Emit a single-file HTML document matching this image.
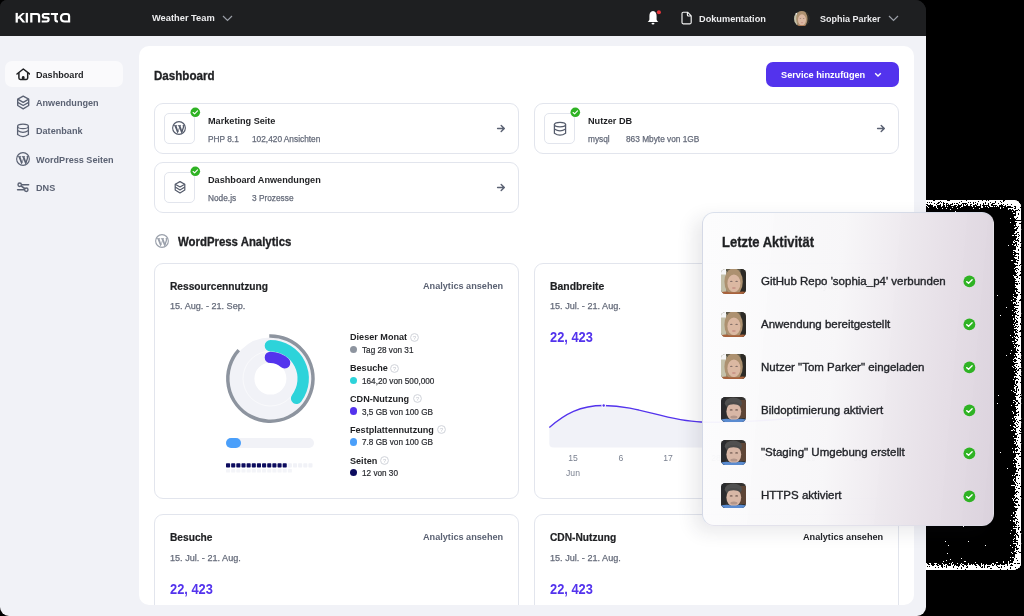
<!DOCTYPE html>
<html><head><meta charset="utf-8">
<style>
*{margin:0;padding:0;box-sizing:border-box}
html,body{width:1024px;height:616px;overflow:hidden;background:#000;font-family:"Liberation Sans",sans-serif}
body{position:relative}
.abs,.av{position:absolute}
.t{position:absolute;white-space:nowrap;line-height:1;will-change:transform}
#win{position:absolute;left:0;top:0;width:926px;height:616px;background:linear-gradient(#1e1f21 0 35.5px,#f1f2f7 35.5px);border-radius:7px 11px 9px 9px;overflow:hidden}
#top{position:absolute;left:0;top:0;width:926px;height:35.5px;background:#1e1f21}
#fringe{position:absolute;left:860px;top:200px;width:161.3px;height:370px;border-radius:7px;background:#0a0a0a;box-shadow:inset 0 0 10px 2px rgba(255,255,255,0.8)}
#act{position:absolute;left:702px;top:212px;width:291.5px;height:313.5px;border-radius:12px;border:1px solid rgba(210,218,232,0.8);
 background:linear-gradient(95deg,rgba(252,252,253,0.96) 0%,rgba(247,246,248,0.965) 45%,rgba(229,222,230,0.97) 80%,rgba(218,209,220,0.98) 100%);border-right-color:rgba(222,216,226,0.6);border-bottom-color:rgba(222,220,232,0.8);
 box-shadow:-8px 6px 18px rgba(40,40,60,0.10)}
.av.w{background:radial-gradient(ellipse 33% 40% at 50% 52%,#e2b9a3 0%,#d9ad95 70%,rgba(217,173,149,0) 72%),radial-gradient(ellipse 48% 60% at 50% 45%,#b99668 0%,#a88457 80%,rgba(0,0,0,0) 82%),linear-gradient(90deg,#8f8c76,#5e4d3c 60%,#3a3228)}
.av.m{background:radial-gradient(ellipse 30% 36% at 46% 50%,#c7a08c 0%,#b98f7a 70%,rgba(0,0,0,0) 72%),radial-gradient(ellipse 40% 40% at 46% 30%,#2f2b29 0%,#2f2b29 80%,rgba(0,0,0,0) 82%),linear-gradient(180deg,#51504d 0%,#3a3937 70%,#4f7fc6 78%,#4f7fc6 100%)}
</style></head><body>
<svg class="abs" style="left:0;top:0" width="1024" height="616" viewBox="0 0 1024 616">
<defs>
<filter id="blur4" x="-20%" y="-20%" width="140%" height="140%"><feGaussianBlur stdDeviation="3.5"/></filter>
<filter id="speck" filterUnits="userSpaceOnUse" x="900" y="180" width="124" height="420" color-interpolation-filters="sRGB">
<feTurbulence type="fractalNoise" baseFrequency="0.6" numOctaves="2" seed="7" result="n"/>
<feColorMatrix in="n" type="matrix" values="1 0 0 0 0  1 0 0 0 0  1 0 0 0 0  0 0 0 0 1" result="ng"/>
<feComposite in="SourceGraphic" in2="ng" operator="arithmetic" k1="0" k2="1" k3="2.0" k4="-1.12" result="sum"/>
<feComponentTransfer in="sum"><feFuncR type="discrete" tableValues="0 1"/><feFuncG type="discrete" tableValues="0 1"/><feFuncB type="discrete" tableValues="0 1"/><feFuncA type="linear" slope="0" intercept="1"/></feComponentTransfer>
</filter>
</defs>
<clipPath id="fclip"><rect x="860" y="200" width="161.3" height="370" rx="7"/></clipPath>
<g clip-path="url(#fclip)"><g filter="url(#speck)">
<rect x="900" y="180" width="124" height="420" fill="#000"/>
<rect x="860" y="200" width="161.3" height="370" rx="7" fill="#fff"/>
<rect x="845" y="206" width="170" height="358" rx="9" fill="#000" filter="url(#blur4)"/>
</g></g>
</svg>
<div id="win">
<div id="top"></div>
<svg class="abs" style="left:12px;top:9px;" width="62" height="18" viewBox="0 0 62 18"><g fill="#fff">
<rect x="3.6" y="3.9" width="2.25" height="9.7"/>
<polygon points="5.5,8.2 10.4,3.9 13.0,3.9 5.5,10.7"/>
<polygon points="7.0,9.3 8.6,7.7 13.4,13.6 10.6,13.6"/>
<rect x="13.7" y="3.9" width="2.25" height="9.7"/>
<path d="M18.2 13.6 V3.9 H25.0 Q28.2 3.9 28.2 7.1 V13.6 H25.95 V7.4 Q25.95 6.1 24.7 6.1 H20.45 V13.6 Z"/>
</g>
<g fill="none" stroke="#fff" stroke-width="2.2">
<path d="M37.6 5.0 H32.3 Q30.8 5.0 30.8 6.7 Q30.8 8.6 32.6 8.6 H34.8 Q36.6 8.6 36.6 10.6 Q36.6 12.5 34.8 12.5 H29.7"/>
<path d="M43.4 3.9 V10.6 Q43.4 12.5 45.3 12.5 H46.0"/><path d="M38.8 5.0 H46.0"/>
<path d="M57.1 12.5 H52.8 Q49.0 12.5 49.0 8.75 Q49.0 5.0 52.8 5.0 H54.8 Q57.1 5.0 57.1 7.3 V13.6"/>
</g></svg>
<div class="t" style="left:151.50px;top:13.93px;font-size:9.3px;font-weight:bold;color:#ececee;transform:scaleY(1.04);transform-origin:0 7.87px;">Weather Team</div>
<svg class="abs" style="left:222px;top:15px;" width="11" height="7" viewBox="0 0 11 7"><path d="M1 1 L5.5 5.5 L10 1" fill="none" stroke="#9a9ea6" stroke-width="1.2"/></svg>
<svg class="abs" style="left:646px;top:9px;" width="16" height="16" viewBox="0 0 16 16"><g transform="translate(0,2)"><path d="M7 0 C4.6 0 3.4 2.2 3.4 5 V8.2 C3.4 9.3 2.5 10.2 1.6 11.1 H12.4 C11.5 10.2 10.6 9.3 10.6 8.2 V5 C10.6 2.2 9.4 0 7 0Z" fill="#fff"/>
<ellipse cx="7" cy="12.6" rx="1.5" ry="0.9" fill="#fff"/><circle cx="12.9" cy="1.2" r="2.05" fill="#e5353b"/></g></svg>
<svg class="abs" style="left:680px;top:11px;" width="13" height="14" viewBox="0 0 13 14"><path d="M3.2 1.2 H7.6 L11.2 4.8 V11.6 Q11.2 12.8 10 12.8 H3.2 Q2 12.8 2 11.6 V2.4 Q2 1.2 3.2 1.2Z M7.4 1.4 V4 Q7.4 5 8.4 5 H11" fill="none" stroke="#f4f4f4" stroke-width="1.15" stroke-linejoin="round"/></svg>
<div class="t" style="left:699.20px;top:14.51px;font-size:9.2px;font-weight:bold;color:#ececee;transform:scaleY(1.04);transform-origin:0 7.79px;">Dokumentation</div>
<svg class="abs" style="left:794px;top:10.5px" width="15.5" height="15.5" viewBox="0 0 25 25"><defs><clipPath id="avc1"><rect width="25" height="25" rx="12.5"/></clipPath></defs><g clip-path="url(#avc1)"><rect width="25" height="25" fill="#5d5848"/>
<rect x="0" y="2" width="5.5" height="23" fill="#c4c1aa"/>
<rect x="0" y="0" width="5" height="5.5" fill="#f6f6f7"/>
<rect x="19.5" y="0" width="5.5" height="25" fill="#2c2a26"/>
<ellipse cx="12.6" cy="12.8" rx="9.2" ry="13.5" fill="#ad9170"/>
<ellipse cx="12.9" cy="14.3" rx="6.5" ry="8.9" fill="#dbb8a2"/>
<ellipse cx="10.3" cy="12.4" rx="1.3" ry="0.7" fill="#86716a"/><ellipse cx="15.6" cy="12.4" rx="1.3" ry="0.7" fill="#86716a"/>
<ellipse cx="12.9" cy="18.9" rx="2.0" ry="0.75" fill="#c48a80"/>
<path d="M1 25 V23 Q5 22 8 23.2 H18 Q21 22 25 23 V25Z" fill="#a8623c"/></g></svg>
<div class="t" style="left:820.20px;top:14.68px;font-size:9.0px;font-weight:bold;color:#ececee;transform:scaleY(1.04);transform-origin:0 7.62px;">Sophia Parker</div>
<svg class="abs" style="left:888px;top:15px;" width="11" height="7" viewBox="0 0 11 7"><path d="M1 1 L5.5 5.5 L10 1" fill="none" stroke="#9a9ea6" stroke-width="1.2"/></svg>
<div class="abs" style="left:5px;top:61px;width:118px;height:26px;background:#fafafc;border-radius:7px"></div>
<svg class="abs" style="left:16px;top:67px;" width="14" height="14" viewBox="0 0 14 14"><path d="M1.0 7.0 L7.3 2.0 L13.6 7.0" fill="none" stroke="#1f2023" stroke-width="1.5" stroke-linejoin="round" stroke-linecap="round"/><path d="M2.9 5.8 V11.0 Q2.9 12.4 4.3 12.4 H10.3 Q11.7 12.4 11.7 11.0 V5.8" fill="none" stroke="#1f2023" stroke-width="1.5"/><path d="M5.9 12.6 V10.3 Q5.9 9.1 7.2 9.1 Q8.5 9.1 8.5 10.3 V12.6Z" fill="#1f2023"/></svg>
<div class="t" style="left:36.00px;top:71.10px;font-size:9.1px;font-weight:bold;color:#1f2023;transform:scaleY(1.04);transform-origin:0 7.70px;">Dashboard</div>
<svg class="abs" style="left:16px;top:95px;" width="14" height="15" viewBox="0 0 14 15"><g fill="none" stroke="#5b6273" stroke-width="1.35" stroke-linejoin="round">
<path d="M1.7 4.2 L7.2 1.2 L12.7 4.2 V10.5 L7.2 13.8 L1.7 10.5 Z"/><path d="M1.7 4.2 L7.2 7.3 L12.7 4.2"/><path d="M1.7 7.4 L7.2 10.5 L12.7 7.4"/></g></svg>
<div class="t" style="left:36.00px;top:99.20px;font-size:9.1px;font-weight:bold;color:#5b6273;transform:scaleY(1.04);transform-origin:0 7.70px;">Anwendungen</div>
<svg class="abs" style="left:16px;top:123px;" width="14" height="15" viewBox="0 0 14 15"><g fill="none" stroke="#5b6273" stroke-width="1.3">
<ellipse cx="7" cy="3.4" rx="5.4" ry="2.2"/><path d="M1.6 3.4 V11.6 Q7 15.6 12.4 11.6 V3.4"/><path d="M1.6 7.5 Q7 11.2 12.4 7.5"/></g></svg>
<div class="t" style="left:36.00px;top:127.40px;font-size:9.1px;font-weight:bold;color:#5b6273;transform:scaleY(1.04);transform-origin:0 7.70px;">Datenbank</div>
<svg class="abs" style="left:16px;top:152px;" width="14" height="14" viewBox="0 0 14 14"><svg viewBox="0 0 20 20" width="14" height="14"><circle cx="10" cy="10" r="9.1" fill="none" stroke="#5b6273" stroke-width="1.6"/>
<g fill="#5b6273"><polygon points="3.2,6.4 6.3,6.4 9.2,15.0 7.7,17.4"/><polygon points="8.9,6.4 12.0,6.4 14.9,15.0 13.4,17.4"/>
<rect x="2.6" y="5.7" width="4.6" height="1.0"/><rect x="8.3" y="5.7" width="4.6" height="1.0"/></g>
<g fill="none" stroke="#5b6273" stroke-linecap="butt"><path d="M7.9 16.9 L10.6 9.6" stroke-width="1.0"/><path d="M13.7 16.6 L16.3 9.4 Q16.8 7.6 15.9 5.6" stroke-width="1.9"/></g></svg></svg>
<div class="t" style="left:36.00px;top:155.60px;font-size:9.1px;font-weight:bold;color:#5b6273;transform:scaleY(1.04);transform-origin:0 7.70px;">WordPress Seiten</div>
<svg class="abs" style="left:16px;top:181px;" width="14" height="12" viewBox="0 0 14 12"><g fill="none" stroke="#5b6273" stroke-width="1.6" stroke-linecap="round">
<path d="M3.7 3.75 H12.6"/><path d="M1.6 8.75 H10.3"/><path d="M4.8 4.6 L9.2 8.0"/></g>
<circle cx="3.7" cy="3.75" r="1.7" fill="#f1f2f7" stroke="#5b6273" stroke-width="1.4"/><circle cx="10.3" cy="8.75" r="1.7" fill="#f1f2f7" stroke="#5b6273" stroke-width="1.4"/></svg>
<div class="t" style="left:36.00px;top:183.70px;font-size:9.1px;font-weight:bold;color:#5b6273;transform:scaleY(1.04);transform-origin:0 7.70px;">DNS</div>
<div class="abs" style="left:139px;top:46px;width:775px;height:559px;background:#fff;border-radius:10px"></div>
<div class="t" style="left:154.30px;top:69.58px;font-size:11.6px;font-weight:bold;color:#1f2023;transform:scaleY(1.12);transform-origin:0 9.8px;-webkit-text-stroke:0.3px #1f2023;">Dashboard</div>
<div class="abs" style="left:766px;top:61.5px;width:133px;height:25.5px;background:#5333ed;border-radius:7px"></div>
<div class="t" style="left:781.00px;top:70.81px;font-size:9.2px;font-weight:bold;color:#fff;transform:scaleY(1.07);transform-origin:0 7.79px;">Service hinzufügen</div>
<svg class="abs" style="left:874px;top:72px;" width="8" height="6" viewBox="0 0 8 6"><path d="M1.2 1.2 L4 4 L6.8 1.2" fill="none" stroke="#fff" stroke-width="1.4"/></svg>
<div class="abs" style="left:154px;top:102.5px;width:365px;height:51px;border:1px solid #e2e5ed;border-radius:9px;background:#fff"></div>
<div class="abs" style="left:164px;top:113.0px;width:31px;height:31px;border:1px solid #e2e5ed;border-radius:5px;background:#fff"></div>
<svg class="abs" style="left:172.3px;top:120.9px;" width="14" height="14" viewBox="0 0 14 14"><svg viewBox="0 0 20 20" width="14" height="14"><circle cx="10" cy="10" r="9.1" fill="none" stroke="#545b6b" stroke-width="1.6"/>
<g fill="#545b6b"><polygon points="3.2,6.4 6.3,6.4 9.2,15.0 7.7,17.4"/><polygon points="8.9,6.4 12.0,6.4 14.9,15.0 13.4,17.4"/>
<rect x="2.6" y="5.7" width="4.6" height="1.0"/><rect x="8.3" y="5.7" width="4.6" height="1.0"/></g>
<g fill="none" stroke="#545b6b" stroke-linecap="butt"><path d="M7.9 16.9 L10.6 9.6" stroke-width="1.0"/><path d="M13.7 16.6 L16.3 9.4 Q16.8 7.6 15.9 5.6" stroke-width="1.9"/></g></svg></svg>
<svg class="abs" style="left:189.1px;top:106.2px;" width="12.6" height="12.6" viewBox="0 0 12.6 12.6"><circle cx="6.3" cy="6.3" r="4.8" fill="#2fb324"/><path d="M4.0920000000000005 6.492 L5.628 7.836 L8.508 4.9559999999999995" fill="none" stroke="#fff" stroke-width="1.104" stroke-linecap="round" stroke-linejoin="round"/></svg>
<div class="t" style="left:208.00px;top:116.65px;font-size:9.15px;font-weight:bold;color:#1f2023;transform:scaleY(1.07);transform-origin:0 7.75px;">Marketing Seite</div>
<div class="t" style="left:208.00px;top:134.97px;font-size:8.3px;font-weight:normal;color:#656b7a;-webkit-text-stroke:0.25px #656b7a;">PHP 8.1</div>
<div class="t" style="left:251.50px;top:134.97px;font-size:8.3px;font-weight:normal;color:#656b7a;-webkit-text-stroke:0.25px #656b7a;">102,420 Ansichten</div>
<svg class="abs" style="left:496px;top:123.5px;" width="10" height="9" viewBox="0 0 10 9"><path d="M1.6 4.5 H8.1 M5.2 1.5 L8.3 4.5 L5.2 7.5" fill="none" stroke="#5b6273" stroke-width="1.45" stroke-linecap="round" stroke-linejoin="round"/></svg>
<div class="abs" style="left:534px;top:102.5px;width:365px;height:51px;border:1px solid #e2e5ed;border-radius:9px;background:#fff"></div>
<div class="abs" style="left:544px;top:113.0px;width:31px;height:31px;border:1px solid #e2e5ed;border-radius:5px;background:#fff"></div>
<svg class="abs" style="left:552.5px;top:120.5px;" width="14" height="16" viewBox="0 0 14 16"><g fill="none" stroke="#545b6b" stroke-width="1.25">
<ellipse cx="7" cy="3.6" rx="5.6" ry="2.3"/><path d="M1.4 3.6 V12.2 Q7 16.2 12.6 12.2 V3.6"/><path d="M1.4 7.9 Q7 11.8 12.6 7.9"/></g></svg>
<svg class="abs" style="left:569.1px;top:106.2px;" width="12.6" height="12.6" viewBox="0 0 12.6 12.6"><circle cx="6.3" cy="6.3" r="4.8" fill="#2fb324"/><path d="M4.0920000000000005 6.492 L5.628 7.836 L8.508 4.9559999999999995" fill="none" stroke="#fff" stroke-width="1.104" stroke-linecap="round" stroke-linejoin="round"/></svg>
<div class="t" style="left:588.00px;top:116.65px;font-size:9.15px;font-weight:bold;color:#1f2023;transform:scaleY(1.07);transform-origin:0 7.75px;">Nutzer DB</div>
<div class="t" style="left:588.00px;top:134.97px;font-size:8.3px;font-weight:normal;color:#656b7a;-webkit-text-stroke:0.25px #656b7a;">mysql</div>
<div class="t" style="left:625.50px;top:134.97px;font-size:8.3px;font-weight:normal;color:#656b7a;-webkit-text-stroke:0.25px #656b7a;">863 Mbyte von 1GB</div>
<svg class="abs" style="left:876px;top:123.5px;" width="10" height="9" viewBox="0 0 10 9"><path d="M1.6 4.5 H8.1 M5.2 1.5 L8.3 4.5 L5.2 7.5" fill="none" stroke="#5b6273" stroke-width="1.45" stroke-linecap="round" stroke-linejoin="round"/></svg>
<div class="abs" style="left:154px;top:161.5px;width:365px;height:51px;border:1px solid #e2e5ed;border-radius:9px;background:#fff"></div>
<div class="abs" style="left:164px;top:172.0px;width:31px;height:31px;border:1px solid #e2e5ed;border-radius:5px;background:#fff"></div>
<svg class="abs" style="left:172.5px;top:180.0px;" width="14" height="15" viewBox="0 0 14 15"><g fill="none" stroke="#545b6b" stroke-width="1.2" stroke-linejoin="round">
<path d="M2.2 4.2 L7 1.6 L11.8 4.2 V9.9 L7 12.9 L2.2 9.9 Z"/><path d="M2.2 4.2 L7 7 L11.8 4.2"/><path d="M2.2 7.1 L7 9.9 L11.8 7.1"/></g></svg>
<svg class="abs" style="left:189.1px;top:165.2px;" width="12.6" height="12.6" viewBox="0 0 12.6 12.6"><circle cx="6.3" cy="6.3" r="4.8" fill="#2fb324"/><path d="M4.0920000000000005 6.492 L5.628 7.836 L8.508 4.9559999999999995" fill="none" stroke="#fff" stroke-width="1.104" stroke-linecap="round" stroke-linejoin="round"/></svg>
<div class="t" style="left:208.00px;top:175.65px;font-size:9.15px;font-weight:bold;color:#1f2023;transform:scaleY(1.07);transform-origin:0 7.75px;">Dashboard Anwendungen</div>
<div class="t" style="left:208.00px;top:193.97px;font-size:8.3px;font-weight:normal;color:#656b7a;-webkit-text-stroke:0.25px #656b7a;">Node.js</div>
<div class="t" style="left:251.50px;top:193.97px;font-size:8.3px;font-weight:normal;color:#656b7a;-webkit-text-stroke:0.25px #656b7a;">3 Prozesse</div>
<svg class="abs" style="left:496px;top:182.5px;" width="10" height="9" viewBox="0 0 10 9"><path d="M1.6 4.5 H8.1 M5.2 1.5 L8.3 4.5 L5.2 7.5" fill="none" stroke="#5b6273" stroke-width="1.45" stroke-linecap="round" stroke-linejoin="round"/></svg>
<svg class="abs" style="left:154.5px;top:233.6px;" width="14" height="14" viewBox="0 0 14 14"><svg viewBox="0 0 20 20" width="14" height="14"><circle cx="10" cy="10" r="9.1" fill="none" stroke="#9aa0ab" stroke-width="1.6"/>
<g fill="#9aa0ab"><polygon points="3.2,6.4 6.3,6.4 9.2,15.0 7.7,17.4"/><polygon points="8.9,6.4 12.0,6.4 14.9,15.0 13.4,17.4"/>
<rect x="2.6" y="5.7" width="4.6" height="1.0"/><rect x="8.3" y="5.7" width="4.6" height="1.0"/></g>
<g fill="none" stroke="#9aa0ab" stroke-linecap="butt"><path d="M7.9 16.9 L10.6 9.6" stroke-width="1.0"/><path d="M13.7 16.6 L16.3 9.4 Q16.8 7.6 15.9 5.6" stroke-width="1.9"/></g></svg></svg>
<div class="t" style="left:177.50px;top:236.95px;font-size:11.4px;font-weight:bold;color:#1f2023;transform:scaleY(1.08);transform-origin:0 9.65px;-webkit-text-stroke:0.3px #1f2023;">WordPress Analytics</div>
<div class="abs" style="left:154px;top:263px;width:365px;height:235.5px;border:1px solid #e2e5ed;border-radius:9px;background:#fff"></div>
<div class="t" style="left:169.60px;top:281.77px;font-size:10.2px;font-weight:bold;color:#1f2023;-webkit-text-stroke:0.2px #1f2023;transform:scaleY(1.07);transform-origin:0 8.63px;">Ressourcennutzung</div>
<div class="t" style="left:423.00px;top:281.75px;font-size:9.15px;font-weight:normal;color:#5b6273;font-weight:bold;">Analytics ansehen</div>
<div class="t" style="left:169.60px;top:302.40px;font-size:9.1px;font-weight:normal;color:#656b7a;-webkit-text-stroke:0.25px #656b7a;">15. Aug. - 21. Sep.</div>
<svg class="abs" style="left:0;top:0" width="1024" height="616" viewBox="0 0 1024 616">
<circle cx="270.4" cy="378.6" r="28.5" fill="none" stroke="#f1f2f7" stroke-width="25"/>
<circle cx="270.4" cy="378.6" r="27.4" fill="none" stroke="#fff" stroke-width="0.6" opacity="0.9"/>
<path d="M269.28 336.01 A42.6 42.6 0 1 1 238.74 350.10" fill="none" stroke="#8d949f" stroke-width="3.5"/>
<path d="M270.40 345.80 A32.8 32.8 0 0 1 296.60 398.34" fill="none" stroke="#2dd3da" stroke-width="11.4" stroke-linecap="round"/>
<path d="M270.40 357.40 A21.2 21.2 0 0 1 284.59 362.85" fill="none" stroke="#5333ed" stroke-width="11.4" stroke-linecap="round"/>
</svg>
<div class="abs" style="left:226px;top:437.7px;width:87.5px;height:10.3px;background:#f1f2f7;border-radius:5.2px"></div>
<div class="abs" style="left:226px;top:437.7px;width:15.2px;height:10.3px;background:#4a9ffa;border-radius:5.2px"></div>
<svg class="abs" style="left:0;top:0" width="1024" height="616" viewBox="0 0 1024 616"><rect x="226.00" y="463.3" width="4.1" height="4.1" rx="0.7" fill="#0c0b5e"/><rect x="231.15" y="463.3" width="4.1" height="4.1" rx="0.7" fill="#0c0b5e"/><rect x="236.30" y="463.3" width="4.1" height="4.1" rx="0.7" fill="#0c0b5e"/><rect x="241.45" y="463.3" width="4.1" height="4.1" rx="0.7" fill="#0c0b5e"/><rect x="246.60" y="463.3" width="4.1" height="4.1" rx="0.7" fill="#0c0b5e"/><rect x="251.75" y="463.3" width="4.1" height="4.1" rx="0.7" fill="#0c0b5e"/><rect x="256.90" y="463.3" width="4.1" height="4.1" rx="0.7" fill="#0c0b5e"/><rect x="262.05" y="463.3" width="4.1" height="4.1" rx="0.7" fill="#0c0b5e"/><rect x="267.20" y="463.3" width="4.1" height="4.1" rx="0.7" fill="#0c0b5e"/><rect x="272.35" y="463.3" width="4.1" height="4.1" rx="0.7" fill="#0c0b5e"/><rect x="277.50" y="463.3" width="4.1" height="4.1" rx="0.7" fill="#0c0b5e"/><rect x="282.65" y="463.3" width="4.1" height="4.1" rx="0.7" fill="#0c0b5e"/><rect x="287.80" y="463.3" width="4.1" height="4.1" rx="0.7" fill="#f1f2f7"/><rect x="292.95" y="463.3" width="4.1" height="4.1" rx="0.7" fill="#f1f2f7"/><rect x="298.10" y="463.3" width="4.1" height="4.1" rx="0.7" fill="#f1f2f7"/><rect x="303.25" y="463.3" width="4.1" height="4.1" rx="0.7" fill="#f1f2f7"/><rect x="308.40" y="463.3" width="4.1" height="4.1" rx="0.7" fill="#f1f2f7"/><rect x="226.00" y="469" width="4.1" height="3.6" rx="0.7" fill="#f3f4f8"/><rect x="231.15" y="469" width="4.1" height="3.6" rx="0.7" fill="#f3f4f8"/><rect x="236.30" y="469" width="4.1" height="3.6" rx="0.7" fill="#f3f4f8"/><rect x="241.45" y="469" width="4.1" height="3.6" rx="0.7" fill="#f3f4f8"/><rect x="246.60" y="469" width="4.1" height="3.6" rx="0.7" fill="#f3f4f8"/><rect x="251.75" y="469" width="4.1" height="3.6" rx="0.7" fill="#f3f4f8"/><rect x="256.90" y="469" width="4.1" height="3.6" rx="0.7" fill="#f3f4f8"/><rect x="262.05" y="469" width="4.1" height="3.6" rx="0.7" fill="#f3f4f8"/><rect x="267.20" y="469" width="4.1" height="3.6" rx="0.7" fill="#f3f4f8"/><rect x="272.35" y="469" width="4.1" height="3.6" rx="0.7" fill="#f3f4f8"/><rect x="277.50" y="469" width="4.1" height="3.6" rx="0.7" fill="#f3f4f8"/><rect x="282.65" y="469" width="4.1" height="3.6" rx="0.7" fill="#f3f4f8"/><rect x="287.80" y="469" width="4.1" height="3.6" rx="0.7" fill="#f3f4f8"/></svg>
<div class="t" style="left:349.60px;top:333.30px;font-size:9.1px;font-weight:bold;color:#1f2023;transform:scaleY(1.07);transform-origin:0 7.70px;">Dieser Monat</div>
<svg class="abs" style="left:410.3px;top:332.70000000000005px;" width="9" height="9" viewBox="0 0 9 9"><circle cx="4.5" cy="4.5" r="3.9" fill="none" stroke="#c9cdd5" stroke-width="0.9"/><text x="4.5" y="6.6" text-anchor="middle" font-size="5.5" font-family="Liberation Sans" fill="#c0c4cc">?</text></svg>
<div class="abs" style="left:349.6px;top:345.8px;width:7.4px;height:7.4px;background:#8d949f;border-radius:50%"></div>
<div class="t" style="left:361.80px;top:346.96px;font-size:8.2px;font-weight:normal;color:#2a2c31;-webkit-text-stroke:0.2px #2a2c31;">Tag 28 von 31</div>
<div class="t" style="left:349.60px;top:364.10px;font-size:9.1px;font-weight:bold;color:#1f2023;transform:scaleY(1.07);transform-origin:0 7.70px;">Besuche</div>
<svg class="abs" style="left:390.09999999999997px;top:363.50000000000006px;" width="9" height="9" viewBox="0 0 9 9"><circle cx="4.5" cy="4.5" r="3.9" fill="none" stroke="#c9cdd5" stroke-width="0.9"/><text x="4.5" y="6.6" text-anchor="middle" font-size="5.5" font-family="Liberation Sans" fill="#c0c4cc">?</text></svg>
<div class="abs" style="left:349.6px;top:376.6px;width:7.4px;height:7.4px;background:#2dd3da;border-radius:50%"></div>
<div class="t" style="left:361.80px;top:377.76px;font-size:8.2px;font-weight:normal;color:#2a2c31;-webkit-text-stroke:0.2px #2a2c31;">164,20 von 500,000</div>
<div class="t" style="left:349.60px;top:394.90px;font-size:9.1px;font-weight:bold;color:#1f2023;transform:scaleY(1.07);transform-origin:0 7.70px;">CDN-Nutzung</div>
<svg class="abs" style="left:413.4px;top:394.30000000000007px;" width="9" height="9" viewBox="0 0 9 9"><circle cx="4.5" cy="4.5" r="3.9" fill="none" stroke="#c9cdd5" stroke-width="0.9"/><text x="4.5" y="6.6" text-anchor="middle" font-size="5.5" font-family="Liberation Sans" fill="#c0c4cc">?</text></svg>
<div class="abs" style="left:349.6px;top:407.40000000000003px;width:7.4px;height:7.4px;background:#5333ed;border-radius:50%"></div>
<div class="t" style="left:361.80px;top:408.56px;font-size:8.2px;font-weight:normal;color:#2a2c31;-webkit-text-stroke:0.2px #2a2c31;">3,5 GB von 100 GB</div>
<div class="t" style="left:349.60px;top:425.70px;font-size:9.1px;font-weight:bold;color:#1f2023;transform:scaleY(1.07);transform-origin:0 7.70px;">Festplattennutzung</div>
<svg class="abs" style="left:437.3px;top:425.1px;" width="9" height="9" viewBox="0 0 9 9"><circle cx="4.5" cy="4.5" r="3.9" fill="none" stroke="#c9cdd5" stroke-width="0.9"/><text x="4.5" y="6.6" text-anchor="middle" font-size="5.5" font-family="Liberation Sans" fill="#c0c4cc">?</text></svg>
<div class="abs" style="left:349.6px;top:438.2px;width:7.4px;height:7.4px;background:#4a9ffa;border-radius:50%"></div>
<div class="t" style="left:361.80px;top:439.36px;font-size:8.2px;font-weight:normal;color:#2a2c31;-webkit-text-stroke:0.2px #2a2c31;">7.8 GB von 100 GB</div>
<div class="t" style="left:349.60px;top:456.50px;font-size:9.1px;font-weight:bold;color:#1f2023;transform:scaleY(1.07);transform-origin:0 7.70px;">Seiten</div>
<svg class="abs" style="left:380.2px;top:455.90000000000003px;" width="9" height="9" viewBox="0 0 9 9"><circle cx="4.5" cy="4.5" r="3.9" fill="none" stroke="#c9cdd5" stroke-width="0.9"/><text x="4.5" y="6.6" text-anchor="middle" font-size="5.5" font-family="Liberation Sans" fill="#c0c4cc">?</text></svg>
<div class="abs" style="left:349.6px;top:469.0px;width:7.4px;height:7.4px;background:#0c0b5e;border-radius:50%"></div>
<div class="t" style="left:361.80px;top:470.16px;font-size:8.2px;font-weight:normal;color:#2a2c31;-webkit-text-stroke:0.2px #2a2c31;">12 von 30</div>
<div class="abs" style="left:534px;top:263px;width:365px;height:235.5px;border:1px solid #e2e5ed;border-radius:9px;background:#fff"></div>
<div class="t" style="left:549.60px;top:282.00px;font-size:10.4px;font-weight:bold;color:#1f2023;-webkit-text-stroke:0.2px #1f2023;transform:scaleY(1.07);transform-origin:0 8.80px;">Bandbreite</div>
<div class="t" style="left:803.00px;top:281.75px;font-size:9.15px;font-weight:bold;color:#5b6273;transform:scaleY(1.07);transform-origin:0 7.75px;">Analytics ansehen</div>
<div class="t" style="left:549.60px;top:302.40px;font-size:9.1px;font-weight:normal;color:#656b7a;-webkit-text-stroke:0.25px #656b7a;">15. Jul. - 21. Aug.</div>
<div class="t" style="left:550.10px;top:331.52px;font-size:12.85px;font-weight:bold;color:#5333ed;transform:scaleY(1.07);transform-origin:0 10.88px;">22, 423</div>
<svg class="abs" style="left:0;top:0" width="1024" height="616" viewBox="0 0 1024 616">
<path d="M549.3 427.5 C565 414 580 405.5 603.7 405.5 C640 405.5 665 421 701 422 C730 423 760 422 883 410 V447.5 H553.3 Q549.3 447.5 549.3 443.5Z" fill="#f1f2f8"/>
<path d="M549.3 427.5 C565 414 580 405.5 603.7 405.5 C640 405.5 665 421 701 422 C730 423 760 422 883 410" fill="none" stroke="#5333ed" stroke-width="1.3"/>
<circle cx="603.7" cy="405.5" r="2.3" fill="#fff"/><circle cx="603.7" cy="405.5" r="1.2" fill="#5333ed"/>
</svg>
<div class="t" style="left:553.00px;top:453.62px;font-size:8.6px;font-weight:normal;color:#7b8291;width:40px;text-align:center;">15</div>
<div class="t" style="left:600.70px;top:453.62px;font-size:8.6px;font-weight:normal;color:#7b8291;width:40px;text-align:center;">6</div>
<div class="t" style="left:648.00px;top:453.62px;font-size:8.6px;font-weight:normal;color:#7b8291;width:40px;text-align:center;">17</div>
<div class="t" style="left:695.50px;top:453.62px;font-size:8.6px;font-weight:normal;color:#7b8291;width:40px;text-align:center;">28</div>
<div class="t" style="left:743.00px;top:453.62px;font-size:8.6px;font-weight:normal;color:#7b8291;width:40px;text-align:center;">8</div>
<div class="t" style="left:790.50px;top:453.62px;font-size:8.6px;font-weight:normal;color:#7b8291;width:40px;text-align:center;">19</div>
<div class="t" style="left:838.00px;top:453.62px;font-size:8.6px;font-weight:normal;color:#7b8291;width:40px;text-align:center;">30</div>
<div class="t" style="left:553.00px;top:469.12px;font-size:8.6px;font-weight:normal;color:#7b8291;width:40px;text-align:center;">Jun</div>
<div class="abs" style="left:154px;top:514.3px;width:365px;height:120px;border:1px solid #e2e5ed;border-radius:9px;background:#fff"></div>
<div class="t" style="left:169.60px;top:533.17px;font-size:10.2px;font-weight:bold;color:#1f2023;-webkit-text-stroke:0.2px #1f2023;transform:scaleY(1.07);transform-origin:0 8.63px;">Besuche</div>
<div class="t" style="left:423.00px;top:533.25px;font-size:9.15px;font-weight:bold;color:#5b6273;transform:scaleY(1.07);transform-origin:0 7.75px;">Analytics ansehen</div>
<div class="t" style="left:169.60px;top:554.00px;font-size:9.1px;font-weight:normal;color:#656b7a;-webkit-text-stroke:0.25px #656b7a;">15. Jul. - 21. Aug.</div>
<div class="t" style="left:170.10px;top:583.52px;font-size:12.85px;font-weight:bold;color:#5333ed;transform:scaleY(1.07);transform-origin:0 10.88px;">22, 423</div>
<div class="abs" style="left:534px;top:514.3px;width:365px;height:120px;border:1px solid #e2e5ed;border-radius:9px;background:#fff"></div>
<div class="t" style="left:549.60px;top:533.17px;font-size:10.2px;font-weight:bold;color:#1f2023;-webkit-text-stroke:0.2px #1f2023;transform:scaleY(1.07);transform-origin:0 8.63px;">CDN-Nutzung</div>
<div class="t" style="left:803.00px;top:533.25px;font-size:9.15px;font-weight:bold;color:#23252a;transform:scaleY(1.07);transform-origin:0 7.75px;">Analytics ansehen</div>
<div class="t" style="left:549.60px;top:554.00px;font-size:9.1px;font-weight:normal;color:#656b7a;-webkit-text-stroke:0.25px #656b7a;">15. Jul. - 21. Aug.</div>
<div class="t" style="left:550.10px;top:583.52px;font-size:12.85px;font-weight:bold;color:#5333ed;transform:scaleY(1.07);transform-origin:0 10.88px;">22, 423</div>
<div class="abs" style="left:139px;top:605px;width:775px;height:20px;background:#f1f2f7"></div>
</div>
<div class="abs" style="left:900px;top:213px;width:93px;height:312px;background:#fff;border-radius:0 12px 12px 0"></div>
<div id="act"></div>
<div class="t" style="left:721.50px;top:235.80px;font-size:13.0px;font-weight:bold;color:#1f2023;transform:scaleY(1.1);transform-origin:0 11px;-webkit-text-stroke:0.3px #1f2023;">Letzte Aktivität</div>
<svg class="abs" style="left:721px;top:268.7px" width="25" height="25" viewBox="0 0 25 25"><defs><clipPath id="avc2"><rect width="25" height="25" rx="4.5"/></clipPath></defs><g clip-path="url(#avc2)"><rect width="25" height="25" fill="#5d5848"/>
<rect x="0" y="2" width="5.5" height="23" fill="#c4c1aa"/>
<rect x="0" y="0" width="5" height="5.5" fill="#f6f6f7"/>
<rect x="19.5" y="0" width="5.5" height="25" fill="#2c2a26"/>
<ellipse cx="12.6" cy="12.8" rx="9.2" ry="13.5" fill="#ad9170"/>
<ellipse cx="12.9" cy="14.3" rx="6.5" ry="8.9" fill="#dbb8a2"/>
<ellipse cx="10.3" cy="12.4" rx="1.3" ry="0.7" fill="#86716a"/><ellipse cx="15.6" cy="12.4" rx="1.3" ry="0.7" fill="#86716a"/>
<ellipse cx="12.9" cy="18.9" rx="2.0" ry="0.75" fill="#c48a80"/>
<path d="M1 25 V23 Q5 22 8 23.2 H18 Q21 22 25 23 V25Z" fill="#a8623c"/></g></svg>
<div class="t" style="left:760.50px;top:276.07px;font-size:11.5px;font-weight:normal;color:#222429;-webkit-text-stroke:0.35px #222429;">GitHub Repo 'sophia_p4' verbunden</div>
<svg class="abs" style="left:962.1px;top:274.3px;" width="14.8" height="14.8" viewBox="0 0 14.8 14.8"><circle cx="7.4" cy="7.4" r="5.9" fill="#2fb324"/><path d="M4.686 7.636000000000001 L6.574 9.288 L10.114 5.748" fill="none" stroke="#fff" stroke-width="1.3570000000000002" stroke-linecap="round" stroke-linejoin="round"/></svg>
<svg class="abs" style="left:721px;top:311.55px" width="25" height="25" viewBox="0 0 25 25"><defs><clipPath id="avc3"><rect width="25" height="25" rx="4.5"/></clipPath></defs><g clip-path="url(#avc3)"><rect width="25" height="25" fill="#5d5848"/>
<rect x="0" y="2" width="5.5" height="23" fill="#c4c1aa"/>
<rect x="0" y="0" width="5" height="5.5" fill="#f6f6f7"/>
<rect x="19.5" y="0" width="5.5" height="25" fill="#2c2a26"/>
<ellipse cx="12.6" cy="12.8" rx="9.2" ry="13.5" fill="#ad9170"/>
<ellipse cx="12.9" cy="14.3" rx="6.5" ry="8.9" fill="#dbb8a2"/>
<ellipse cx="10.3" cy="12.4" rx="1.3" ry="0.7" fill="#86716a"/><ellipse cx="15.6" cy="12.4" rx="1.3" ry="0.7" fill="#86716a"/>
<ellipse cx="12.9" cy="18.9" rx="2.0" ry="0.75" fill="#c48a80"/>
<path d="M1 25 V23 Q5 22 8 23.2 H18 Q21 22 25 23 V25Z" fill="#a8623c"/></g></svg>
<div class="t" style="left:760.50px;top:318.92px;font-size:11.5px;font-weight:normal;color:#222429;-webkit-text-stroke:0.35px #222429;">Anwendung bereitgestellt</div>
<svg class="abs" style="left:962.1px;top:317.15000000000003px;" width="14.8" height="14.8" viewBox="0 0 14.8 14.8"><circle cx="7.4" cy="7.4" r="5.9" fill="#2fb324"/><path d="M4.686 7.636000000000001 L6.574 9.288 L10.114 5.748" fill="none" stroke="#fff" stroke-width="1.3570000000000002" stroke-linecap="round" stroke-linejoin="round"/></svg>
<svg class="abs" style="left:721px;top:354.4px" width="25" height="25" viewBox="0 0 25 25"><defs><clipPath id="avc4"><rect width="25" height="25" rx="4.5"/></clipPath></defs><g clip-path="url(#avc4)"><rect width="25" height="25" fill="#5d5848"/>
<rect x="0" y="2" width="5.5" height="23" fill="#c4c1aa"/>
<rect x="0" y="0" width="5" height="5.5" fill="#f6f6f7"/>
<rect x="19.5" y="0" width="5.5" height="25" fill="#2c2a26"/>
<ellipse cx="12.6" cy="12.8" rx="9.2" ry="13.5" fill="#ad9170"/>
<ellipse cx="12.9" cy="14.3" rx="6.5" ry="8.9" fill="#dbb8a2"/>
<ellipse cx="10.3" cy="12.4" rx="1.3" ry="0.7" fill="#86716a"/><ellipse cx="15.6" cy="12.4" rx="1.3" ry="0.7" fill="#86716a"/>
<ellipse cx="12.9" cy="18.9" rx="2.0" ry="0.75" fill="#c48a80"/>
<path d="M1 25 V23 Q5 22 8 23.2 H18 Q21 22 25 23 V25Z" fill="#a8623c"/></g></svg>
<div class="t" style="left:760.50px;top:361.77px;font-size:11.5px;font-weight:normal;color:#222429;-webkit-text-stroke:0.35px #222429;">Nutzer &quot;Tom Parker&quot; eingeladen</div>
<svg class="abs" style="left:962.1px;top:360.0px;" width="14.8" height="14.8" viewBox="0 0 14.8 14.8"><circle cx="7.4" cy="7.4" r="5.9" fill="#2fb324"/><path d="M4.686 7.636000000000001 L6.574 9.288 L10.114 5.748" fill="none" stroke="#fff" stroke-width="1.3570000000000002" stroke-linecap="round" stroke-linejoin="round"/></svg>
<svg class="abs" style="left:721px;top:397.25px" width="25" height="25" viewBox="0 0 25 25"><defs><clipPath id="avc5"><rect width="25" height="25" rx="4.5"/></clipPath></defs><g clip-path="url(#avc5)"><rect width="25" height="25" fill="#33312f"/>
<rect x="0" y="0" width="5" height="25" fill="#2a2b2e"/>
<rect x="18.5" y="3" width="6.5" height="18" fill="#5e4536"/>
<ellipse cx="12.4" cy="6.2" rx="8.6" ry="5.6" fill="#505050"/>
<ellipse cx="12.8" cy="14.6" rx="7.4" ry="9.0" fill="#d8b7a6"/>
<path d="M5.4 9.5 Q6 5.2 12.5 5.0 Q19 5.2 19.8 9.5 Q16 7.2 12.5 7.3 Q8 7.3 5.4 9.5Z" fill="#4a4a4a"/>
<ellipse cx="10.2" cy="12.9" rx="1.5" ry="0.7" fill="#6a544c"/><ellipse cx="15.6" cy="12.9" rx="1.5" ry="0.7" fill="#6a544c"/>
<ellipse cx="12.9" cy="20.0" rx="3.6" ry="1.6" fill="#b3968a"/>
<path d="M0 25 V22.5 Q6 21 10 22.5 H15 Q19 21 25 22.5 V25Z" fill="#5a8bd0"/></g></svg>
<div class="t" style="left:760.50px;top:404.62px;font-size:11.5px;font-weight:normal;color:#222429;-webkit-text-stroke:0.35px #222429;">Bildoptimierung aktiviert</div>
<svg class="abs" style="left:962.1px;top:402.85px;" width="14.8" height="14.8" viewBox="0 0 14.8 14.8"><circle cx="7.4" cy="7.4" r="5.9" fill="#2fb324"/><path d="M4.686 7.636000000000001 L6.574 9.288 L10.114 5.748" fill="none" stroke="#fff" stroke-width="1.3570000000000002" stroke-linecap="round" stroke-linejoin="round"/></svg>
<svg class="abs" style="left:721px;top:440.1px" width="25" height="25" viewBox="0 0 25 25"><defs><clipPath id="avc6"><rect width="25" height="25" rx="4.5"/></clipPath></defs><g clip-path="url(#avc6)"><rect width="25" height="25" fill="#33312f"/>
<rect x="0" y="0" width="5" height="25" fill="#2a2b2e"/>
<rect x="18.5" y="3" width="6.5" height="18" fill="#5e4536"/>
<ellipse cx="12.4" cy="6.2" rx="8.6" ry="5.6" fill="#505050"/>
<ellipse cx="12.8" cy="14.6" rx="7.4" ry="9.0" fill="#d8b7a6"/>
<path d="M5.4 9.5 Q6 5.2 12.5 5.0 Q19 5.2 19.8 9.5 Q16 7.2 12.5 7.3 Q8 7.3 5.4 9.5Z" fill="#4a4a4a"/>
<ellipse cx="10.2" cy="12.9" rx="1.5" ry="0.7" fill="#6a544c"/><ellipse cx="15.6" cy="12.9" rx="1.5" ry="0.7" fill="#6a544c"/>
<ellipse cx="12.9" cy="20.0" rx="3.6" ry="1.6" fill="#b3968a"/>
<path d="M0 25 V22.5 Q6 21 10 22.5 H15 Q19 21 25 22.5 V25Z" fill="#5a8bd0"/></g></svg>
<div class="t" style="left:760.50px;top:447.47px;font-size:11.5px;font-weight:normal;color:#222429;-webkit-text-stroke:0.35px #222429;">&quot;Staging&quot; Umgebung erstellt</div>
<svg class="abs" style="left:962.1px;top:445.70000000000005px;" width="14.8" height="14.8" viewBox="0 0 14.8 14.8"><circle cx="7.4" cy="7.4" r="5.9" fill="#2fb324"/><path d="M4.686 7.636000000000001 L6.574 9.288 L10.114 5.748" fill="none" stroke="#fff" stroke-width="1.3570000000000002" stroke-linecap="round" stroke-linejoin="round"/></svg>
<svg class="abs" style="left:721px;top:482.95px" width="25" height="25" viewBox="0 0 25 25"><defs><clipPath id="avc7"><rect width="25" height="25" rx="4.5"/></clipPath></defs><g clip-path="url(#avc7)"><rect width="25" height="25" fill="#33312f"/>
<rect x="0" y="0" width="5" height="25" fill="#2a2b2e"/>
<rect x="18.5" y="3" width="6.5" height="18" fill="#5e4536"/>
<ellipse cx="12.4" cy="6.2" rx="8.6" ry="5.6" fill="#505050"/>
<ellipse cx="12.8" cy="14.6" rx="7.4" ry="9.0" fill="#d8b7a6"/>
<path d="M5.4 9.5 Q6 5.2 12.5 5.0 Q19 5.2 19.8 9.5 Q16 7.2 12.5 7.3 Q8 7.3 5.4 9.5Z" fill="#4a4a4a"/>
<ellipse cx="10.2" cy="12.9" rx="1.5" ry="0.7" fill="#6a544c"/><ellipse cx="15.6" cy="12.9" rx="1.5" ry="0.7" fill="#6a544c"/>
<ellipse cx="12.9" cy="20.0" rx="3.6" ry="1.6" fill="#b3968a"/>
<path d="M0 25 V22.5 Q6 21 10 22.5 H15 Q19 21 25 22.5 V25Z" fill="#5a8bd0"/></g></svg>
<div class="t" style="left:760.50px;top:490.32px;font-size:11.5px;font-weight:normal;color:#222429;-webkit-text-stroke:0.35px #222429;">HTTPS aktiviert</div>
<svg class="abs" style="left:962.1px;top:488.55px;" width="14.8" height="14.8" viewBox="0 0 14.8 14.8"><circle cx="7.4" cy="7.4" r="5.9" fill="#2fb324"/><path d="M4.686 7.636000000000001 L6.574 9.288 L10.114 5.748" fill="none" stroke="#fff" stroke-width="1.3570000000000002" stroke-linecap="round" stroke-linejoin="round"/></svg>
</body></html>
